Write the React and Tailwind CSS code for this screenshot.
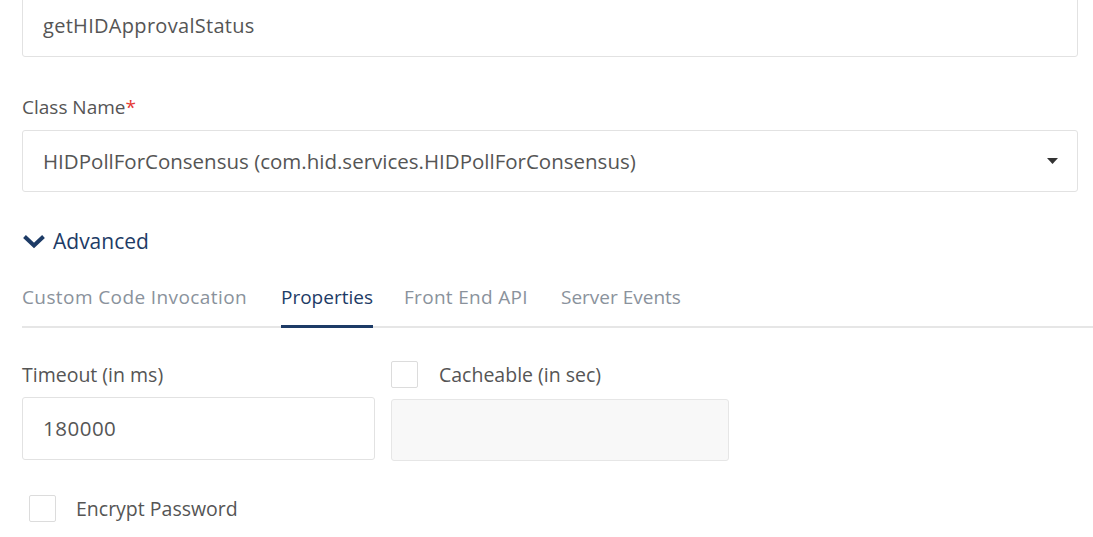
function Checkbox() {
  return <div className="w-[27px] h-[27px] border border-[#dcdcdc] bg-white rounded-[2px] shrink-0" />;
}

export default function App() {
  return (
    <div
      className="w-[1093px] h-[537px] overflow-hidden bg-white text-[#555]"
      style={{ fontFamily: '"Open Sans", "Noto Sans", sans-serif' }}
    >
      <div className="pl-[22px] pr-[15px] mt-[-5px]">
        <div className="h-[62px] border border-[#e2e2e2] rounded-[3px] flex items-center px-[20px] text-[20px] tracking-[0.3px]">
          getHIDApprovalStatus
        </div>

        <div className="mt-[38px] text-[19px] leading-[24px]">
          Class Name<span className="text-[#e53935]">*</span>
        </div>

        <div className="mt-[11px] h-[62px] border border-[#e2e2e2] rounded-[3px] flex items-center justify-between pl-[20px] pr-[19px] text-[20.5px]">
          <span>HIDPollForConsensus (com.hid.services.HIDPollForConsensus)</span>
          <svg width="11" height="6" viewBox="0 0 11 6">
            <path d="M0 0 H11 L5.5 6 Z" fill="#333" />
          </svg>
        </div>

        <div className="mt-[36px] flex items-center text-[#1d3b66] text-[21px] leading-[26px] font-medium">
          <svg width="24" height="15" viewBox="0 0 24 15" className="mr-[7px]">
            <polyline points="2.5,2.5 12,11.5 21.5,2.5" fill="none" stroke="#1d3b66" strokeWidth="4" />
          </svg>
          <span>Advanced</span>
        </div>
      </div>

      <div className="ml-[22px] mt-[31px] border-b-2 border-[#e6e6e6] flex text-[19px] leading-[24px] text-[#8a929c]">
        <div className="w-[227px] pb-[17px] tracking-[0.4px]">Custom Code Invocation</div>
        <div className="ml-[32px] w-[92px] pb-[14px] text-center text-[#1d3b66] border-b-[3px] border-[#1d3b66] mb-[-2px]">
          Properties
        </div>
        <div className="ml-[31px] w-[125px] pb-[17px] tracking-[0.3px]">Front End API</div>
        <div className="ml-[32px] pb-[17px]">Server Events</div>
      </div>

      <div className="pl-[22px] mt-[33px] flex gap-[16px]">
        <div className="w-[353px]">
          <div className="text-[19.5px] leading-[24px] mt-[2px]">Timeout (in ms)</div>
          <div className="mt-[10px] h-[63px] border border-[#e2e2e2] rounded-[3px] flex items-center px-[20px] text-[20.5px] tracking-[0.5px]">
            180000
          </div>
        </div>
        <div className="w-[338px]">
          <div className="flex items-center">
            <Checkbox />
            <span className="ml-[21px] text-[19.5px] leading-[24px]">Cacheable (in sec)</span>
          </div>
          <div className="mt-[11px] h-[62px] border border-[#e6e6e6] rounded-[3px] bg-[#f8f8f8]" />
        </div>
      </div>

      <div className="pl-[29px] mt-[34px] flex items-center">
        <Checkbox />
        <span className="ml-[20px] text-[19.5px] leading-[24px]">Encrypt Password</span>
      </div>
    </div>
  );
}
